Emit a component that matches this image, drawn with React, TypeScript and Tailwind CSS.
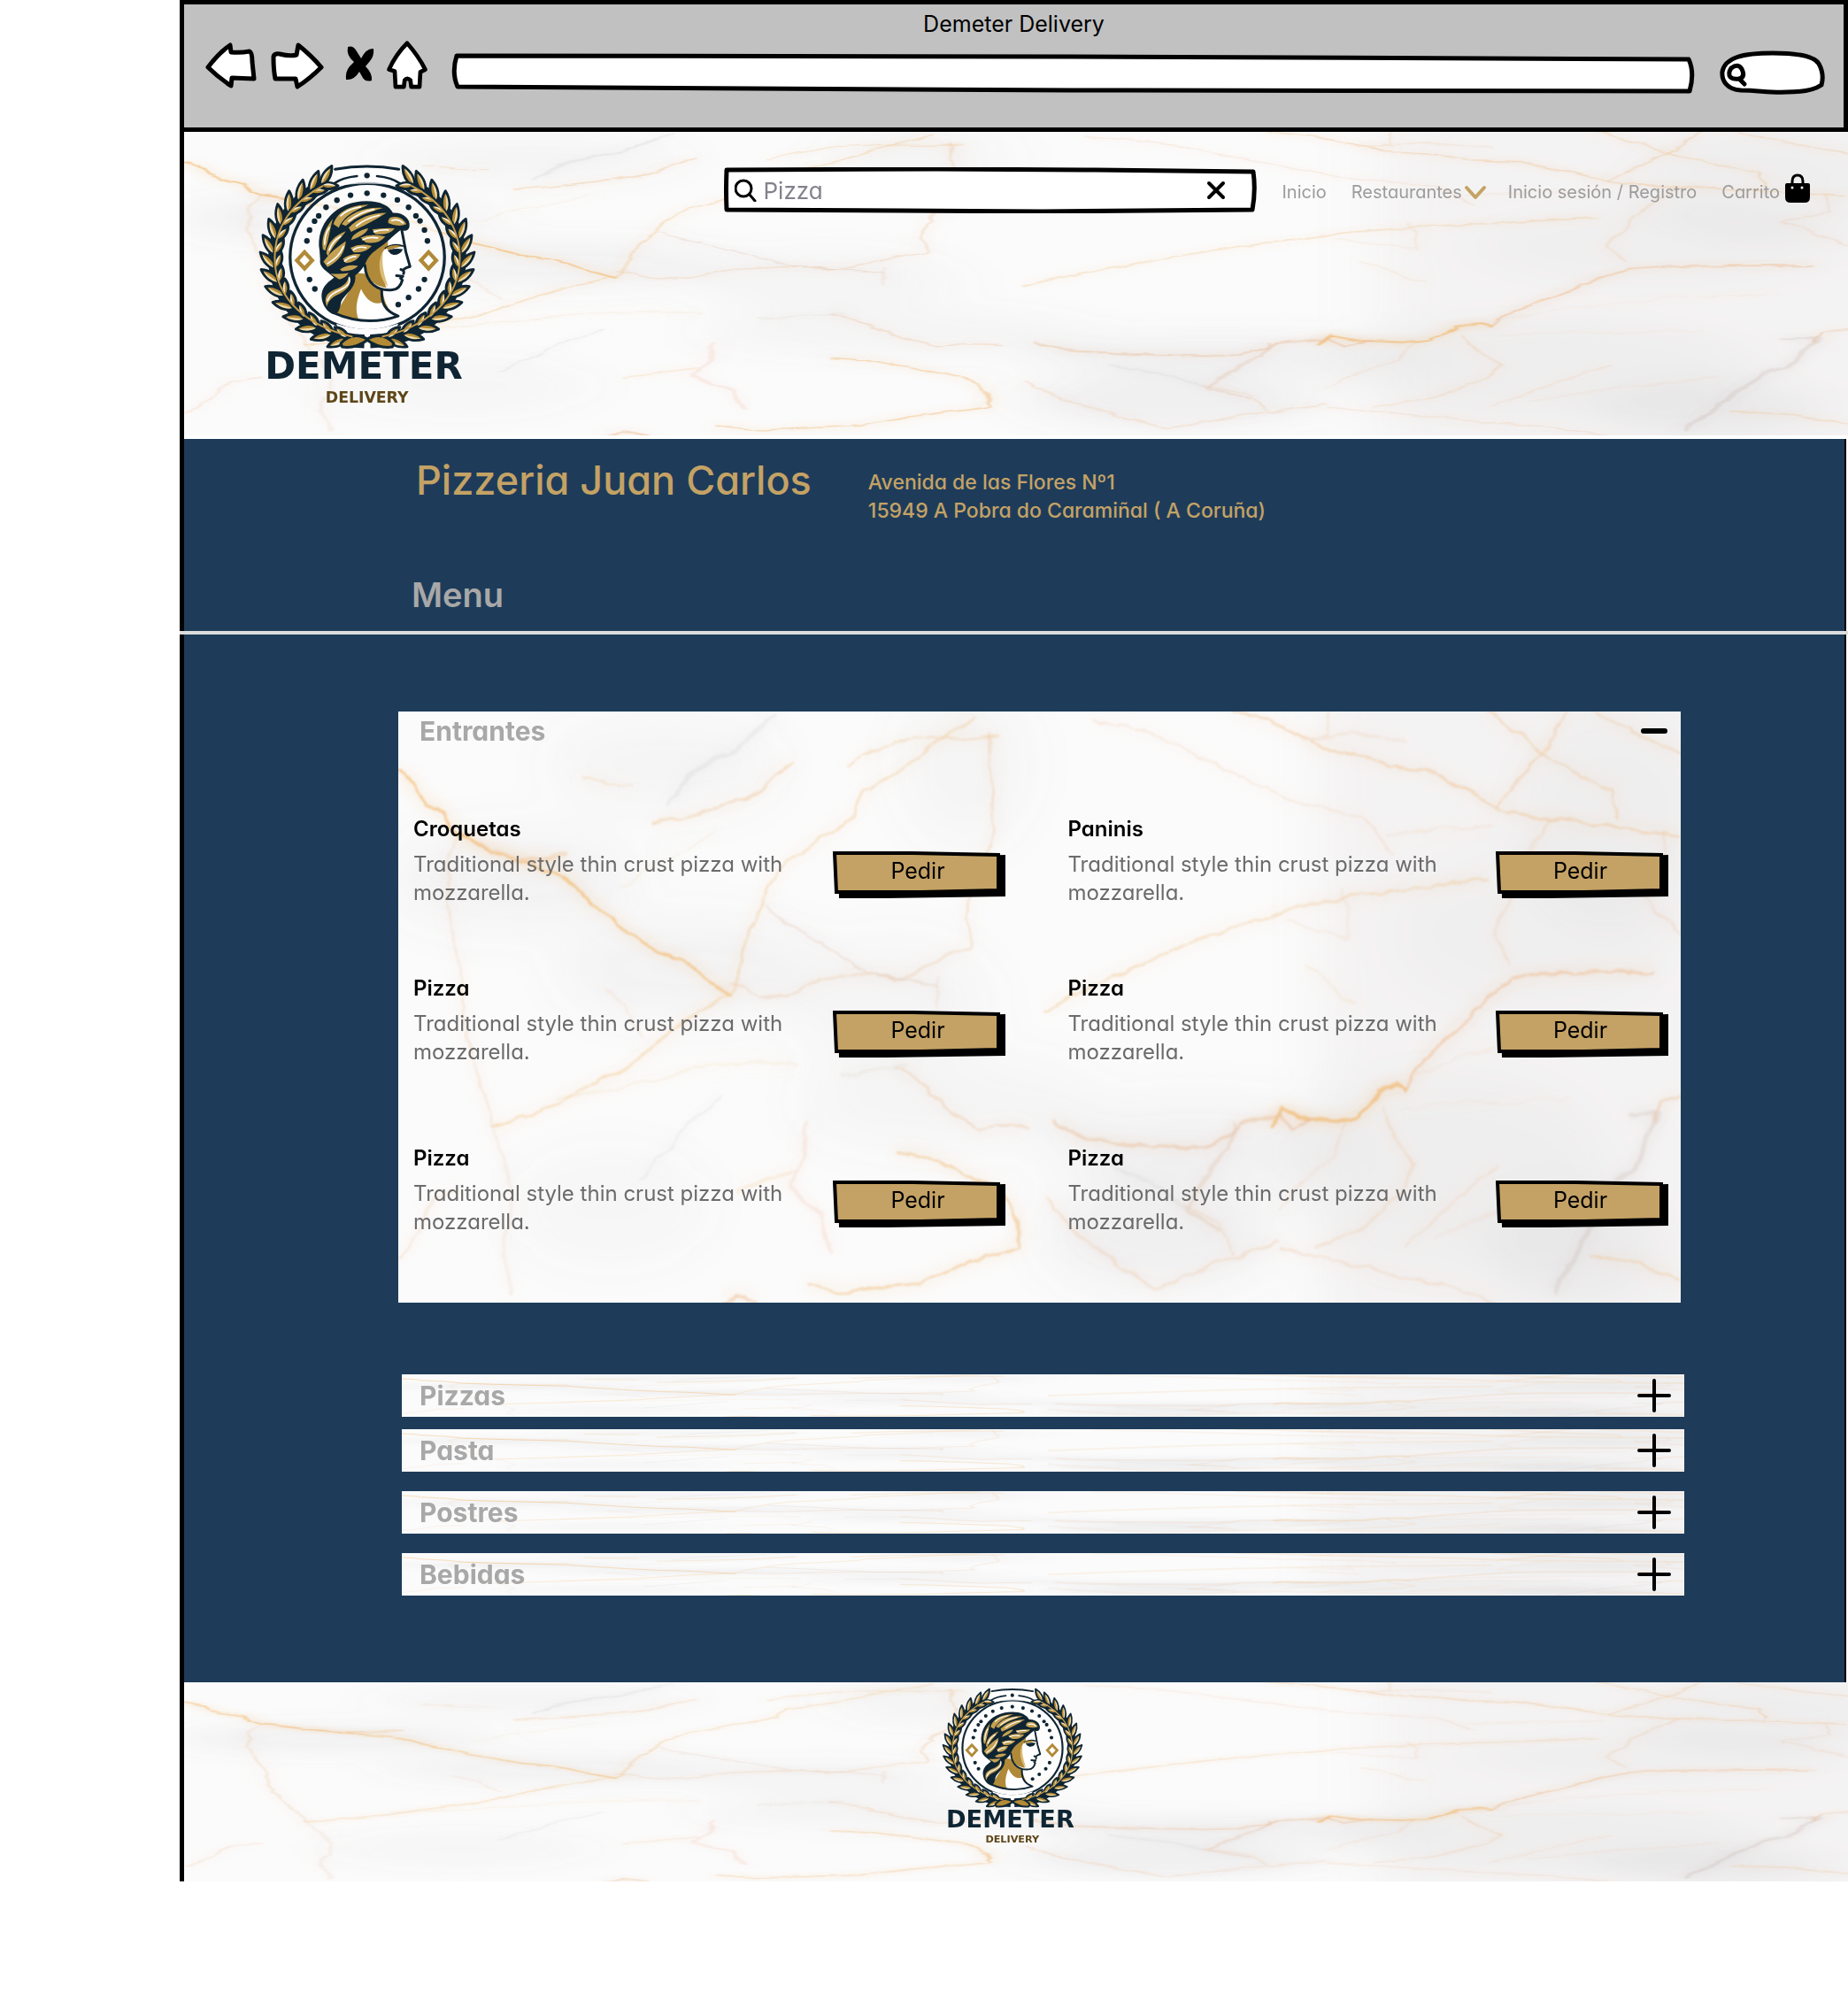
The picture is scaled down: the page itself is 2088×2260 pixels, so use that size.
import { useState } from "react";

const INK = "#0f2533";

/* ---------- Marble texture ---------- */

const LEFT_VEINS: [string, number, number, string][] = [
  ["M22 185L58 212L68 240L130 283L172 345L250 382L335 412L430 445L482 500L590 590L660 638L722 660L838 750", 6, 0.75, "#f3b565"],
  ["M180 350L250 378L330 405L430 400", 12, 0.35, "#f0b878"],
  ["M838 750L780 775L720 815L650 880L600 925L470 990L400 1030L255 1085", 5, 0.6, "#f5c88c"],
  ["M255 1085L240 1030L215 940L180 800L175 690L150 560L140 420L170 350", 6, 0.35, "#eec9a4"],
  ["M255 1085L280 1170L300 1260L280 1400L300 1500", 8, 0.22, "#e9c9ae"],
  ["M838 750L852 700L865 640L895 570L930 480L975 415L1060 355L1145 290L1165 235L1260 180L1350 105L1440 45", 5, 0.5, "#f4c68a"],
  ["M1500 98L1400 98L1340 95L1250 105L1130 165", 4, 0.5, "#f2c48b"],
  ["M650 318L760 288L845 265L900 240L950 190L990 160", 5, 0.5, "#f1bd88"],
  ["M470 195L530 215L600 217", 3, 0.5, "#f2c48b"],
  ["M690 270L740 190L860 115L950 45", 10, 0.18, "#b9b9bd"],
  ["M1475 90L1485 220L1490 330L1450 420L1420 540L1430 625L1330 670L1260 708L1160 695L1060 710L980 745L920 755L838 720", 6, 0.42, "#efc39e"],
  ["M920 530L1020 590L1110 650L1180 695L1290 710L1350 730", 4, 0.45, "#ddbfa8"],
  ["M1350 700L1350 780", 6, 0.25, "#e6bfa8"],
  ["M1250 930L1310 975L1380 1045L1450 1095L1500 1075L1568 1080", 6, 0.45, "#f0c098"],
  ["M1110 950L1180 940L1270 925", 8, 0.22, "#dcd2c0"],
  ["M1030 1075L1010 1180L980 1230L1060 1300L1085 1400", 9, 0.25, "#f3bfa4"],
  ["M860 1240L930 1215L990 1195", 8, 0.28, "#f6c98f"],
  ["M1030 1480L1120 1500L1210 1490L1300 1480L1400 1435L1550 1385L1550 1320L1510 1250L1400 1190L1320 1155L1250 1140", 6, 0.6, "#f1bd7c"],
  ["M820 1528L850 1505L900 1525", 6, 0.6, "#ecbb8d"],
  ["M22 1420L70 1350L110 1260L170 1240", 6, 0.3, "#efc39e"],
  ["M620 1210L700 1120L780 1030L820 1000", 5, 0.3, "#cfcccb"],
  ["M530 735L580 770L620 850", 6, 0.25, "#edc7a5"],
  ["M410 1010L560 985L760 930L900 915L1000 930", 6, 0.25, "#f3d5a8"],
  ["M570 480L640 420L700 395L800 340", 5, 0.2, "#eed7b0"],
];

const RIGHT_VEINS: [string, number, number, string][] = [
  ["M450 31L540 55L610 90L660 125L740 135L830 170L910 178L1000 225L1080 272L1160 300L1220 298L1280 315L1400 325L1521 345", 5, 0.6, "#f2bd83"],
  ["M1250 31L1210 100L1160 170L1080 270", 4, 0.6, "#f1c08e"],
  ["M1060 31L1130 85L1200 145L1290 195L1360 230L1370 300", 4, 0.55, "#f2bd83"],
  ["M1310 31L1380 70L1470 115L1520 135", 4, 0.5, "#f2bd83"],
  ["M680 31L675 90L620 105L740 85L860 110", 5, 0.35, "#eec9a4"],
  ["M110 50L260 90L380 150L470 195L560 245L640 268L760 300L830 390", 4, 0.42, "#f0c9a4"],
  ["M0 785L60 755L150 705L240 665L330 622L440 580L520 560L590 530L720 500L880 480L1060 455", 5, 0.55, "#f2c48b"],
  ["M820 345L930 332L1080 320", 3, 0.35, "#f0c9a4"],
  ["M580 560L650 580L730 605L710 480", 4, 0.3, "#f0c9a4"],
  ["M620 670L690 730L740 772", 5, 0.3, "#efcf9e"],
  ["M1210 300L1150 400L1110 500L1075 600L1110 670", 6, 0.35, "#f0c9a4"],
  ["M1460 690L1330 690L1200 695L1120 708L1070 745L1000 820L930 890L890 940L860 990", 7, 0.6, "#eeb98a"],
  ["M860 990L840 978L800 990L775 1030L750 1055L700 1068L620 1060L570 1035L540 1075", 8, 0.75, "#f1b363"],
  ["M640 1060L590 1090L560 1050L470 1072L440 1105L400 1130L330 1136L200 1125L90 1110L20 1065", 7, 0.5, "#e9b488"],
  ["M455 1070L440 1140L400 1180L370 1240L340 1290L420 1350", 8, 0.35, "#dfb9a0"],
  ["M810 1030L830 1100L880 1180L840 1260L740 1350L650 1385", 5, 0.45, "#f2c9a2"],
  ["M720 1070L690 1150L620 1220L560 1290", 4, 0.35, "#f2c9a2"],
  ["M1080 1180L990 1260L860 1385", 4, 0.4, "#f2c9a2"],
  ["M930 1360L1100 1290L1280 1240", 4, 0.25, "#f2c9a2"],
  ["M1400 1050L1470 1050L1440 1120L1410 1190L1370 1220L1300 1340L1260 1420L1220 1500", 12, 0.3, "#c7b5ae"],
  ["M1521 1000L1475 1020L1460 1070", 5, 0.5, "#eeb98a"],
  ["M0 1260L70 1340L150 1410L270 1490L400 1430L560 1370", 6, 0.4, "#f0c29c"],
  ["M560 1385L700 1420L840 1460L950 1480L1080 1525", 5, 0.4, "#f0c29c"],
  ["M1310 1412L1400 1420L1521 1468", 5, 0.5, "#f2bd83"],
  ["M330 1275L420 1330L450 1400", 5, 0.35, "#eebf96"],
  ["M870 960L1010 900L1180 850L1380 830", 3, 0.25, "#f2c9a2"],
  ["M850 1035L1000 1025L1250 1010", 3, 0.22, "#f2c9a2"],
  ["M1480 340L1490 430L1400 470L1521 590", 5, 0.35, "#eec2a2"],
  ["M160 1180L280 1240L340 1290", 7, 0.25, "#cfc6c6"],
];

const CLOUDS: [number, number, number, number, number][] = [
  [300, 60, 130, 50, 0.05],
  [330, 290, 150, 50, 0.07],
  [560, 330, 110, 70, 0.05],
  [130, 190, 140, 50, 0.07],
  [640, 60, 70, 90, 0.05],
  [900, 490, 170, 45, 0.08],
  [860, 590, 130, 60, 0.09],
  [1280, 250, 160, 90, 0.04],
  [1180, 520, 190, 110, 0.05],
  [1370, 120, 110, 120, 0.05],
  [1330, 610, 100, 60, 0.08],
  [620, 440, 170, 50, 0.05],
  [240, 560, 110, 60, 0.04],
];

function MarbleDefs() {
  return (
    <svg className="absolute h-0 w-0" aria-hidden="true">
      <defs>
        <filter id="vein-soft" x="-5%" y="-5%" width="110%" height="110%">
          <feTurbulence type="fractalNoise" baseFrequency="0.035" numOctaves="3" seed="4" result="n" />
          <feDisplacementMap in="SourceGraphic" in2="n" scale="12" xChannelSelector="R" yChannelSelector="G" result="d" />
          <feGaussianBlur in="d" stdDeviation="1" />
        </filter>
        <filter id="vein-glow" x="-5%" y="-5%" width="110%" height="110%">
          <feGaussianBlur stdDeviation="8" />
        </filter>
        <filter id="cloud-soft" x="-20%" y="-20%" width="140%" height="140%">
          <feGaussianBlur stdDeviation="28" />
        </filter>
      </defs>
    </svg>
  );
}

function Veins() {
  return (
    <>
      <g transform="scale(0.459 0.446) translate(-22 -31)">
        {LEFT_VEINS.map(([d, w, o, c], i) => (
          <path key={i} d={d} stroke={c} strokeWidth={w} strokeOpacity={o} />
        ))}
      </g>
      <g transform="translate(730 0) scale(0.472 0.446) translate(0 -31)">
        {RIGHT_VEINS.map(([d, w, o, c], i) => (
          <path key={i} d={d} stroke={c} strokeWidth={w} strokeOpacity={o} />
        ))}
      </g>
    </>
  );
}

function Marble({ thin = false }: { thin?: boolean }) {
  return (
    <svg
      className={
        "pointer-events-none absolute inset-0 h-full w-full " +
        (thin ? "[&_path]:[stroke-width:1px] [&_path]:[vector-effect:non-scaling-stroke]" : "")
      }
      viewBox="0 0 1448 667"
      preserveAspectRatio="none"
      aria-hidden="true"
    >
      <rect width="1448" height="667" fill="#fbfbfb" />
      <g filter="url(#cloud-soft)">
        <rect x="1040" y="-60" width="520" height="800" fill="#b8b4b0" opacity="0.1" />
        {CLOUDS.map(([x, y, rx, ry, o], i) => (
          <ellipse key={i} cx={x} cy={y} rx={rx} ry={ry} fill="#85838c" opacity={o} />
        ))}
      </g>
      {!thin && (
        <g fill="none" filter="url(#vein-glow)">
          <Veins />
        </g>
      )}
      <g fill="none" strokeLinejoin="round" strokeLinecap="round" opacity="0.85" filter={thin ? undefined : "url(#vein-soft)"}>
        <Veins />
      </g>
    </svg>
  );
}

/* ---------- Brand mark ---------- */

const LEAF_ANGLES = [12, 22, 32, 42, 52, 62, 72, 82, 92, 102, 112, 122, 132, 142, 150];

function Branch() {
  return (
    <g>
      <path d="M425 648C250 643 122 520 122 365C122 250 190 165 292 115" fill="none" stroke={INK} strokeWidth="46" />
      {LEAF_ANGLES.map((deg) => {
        const t = (deg * Math.PI) / 180;
        const x = 435 - 314 * Math.sin(t);
        const y = 362 + 280 * Math.cos(t);
        const dir = (Math.atan2(-280 * Math.sin(t), -314 * Math.cos(t)) * 180) / Math.PI;
        return (
          <g key={deg} transform={`translate(${x.toFixed(1)} ${y.toFixed(1)})`}>
            <g transform={`rotate(${(dir - 32).toFixed(1)})`}>
              <path d="M-2 0C14-17 46-19 76-3C52 14 20 16-2 0Z" fill="#b38a35" stroke={INK} strokeWidth="9" strokeLinejoin="round" />
              <path d="M6-2C22-13 46-13 66-3C44-3 26-2 6-2Z" fill="#ecd8a6" />
            </g>
            <g transform={`rotate(${(dir + 30).toFixed(1)})`}>
              <path d="M-2 0C12-14 36-16 58-2C40 13 16 14-2 0Z" fill="#b38a35" stroke={INK} strokeWidth="9" strokeLinejoin="round" />
              <path d="M6-2C18-11 34-11 50-2C34-3 20-2 6-2Z" fill="#f6ecd2" />
            </g>
          </g>
        );
      })}
      <path d="M345 655C375 622 405 622 438 642C410 662 380 672 350 667Z" fill="#b38a35" stroke={INK} strokeWidth="9" strokeLinejoin="round" />
      <path d="M385 632C240 600 121 510 121 365C121 260 180 175 285 120" fill="none" stroke="#c39b49" strokeWidth="6" />
    </g>
  );
}

const DOTS: [number, number][] = [
  [434, 85], [434, 145], [378, 152], [490, 152], [332, 169], [537, 168], [295, 193], [575, 193],
  [270, 222], [600, 222], [256, 240], [614, 239], [239, 270], [629, 270], [230, 307], [639, 307],
  [239, 438], [629, 438], [257, 470], [609, 470], [575, 499], [540, 523],
];

function Logo({ className }: { className: string }) {
  return (
    <svg className={className} viewBox="60 45 750 820" role="img" aria-label="Demeter Delivery">
      <ellipse cx="435" cy="362" rx="262" ry="250" fill="#fff" fillOpacity="0.6" stroke={INK} strokeWidth="10" />
      <path d="M330 66Q435 44 540 66L560 125Q435 100 310 125Z" fill="#fff" fillOpacity="0.7" />
      <g fill="none" stroke={INK} strokeLinecap="round">
        <path d="M326 64Q434 44 542 64" strokeWidth="9" />
        <path d="M322 112Q350 92 400 87M546 112Q518 92 468 87" strokeWidth="8" />
      </g>
      <path d="M330 588Q435 625 540 588L530 615L435 648L340 615Z" fill="#fff" />
      <Branch />
      <g transform="translate(870 0) scale(-1 1)">
        <Branch />
      </g>
      {DOTS.map(([x, y]) => (
        <circle key={`${x}-${y}`} cx={x} cy={y} r="9.5" fill={INK} />
      ))}
      <path d="M222 345L248 373L222 401L196 373ZM643 345L669 373L643 401L617 373Z" fill="#fff" stroke="#b08a38" strokeWidth="13" />

      {/* neck and bust */}
      <path d="M395 415L372 480L345 525L318 552Q420 600 540 562Q495 545 486 470L440 420Z" fill="#b08a38" />
      <path d="M414 470C400 505 392 540 405 572Q470 582 535 563Q498 545 488 515C455 528 430 505 414 470Z" fill="#fff" />
      {/* face */}
      <path d="M440 360L470 300L555 268L565 320L570 362L580 392L558 402L556 418L548 428L553 440L550 462L535 472L500 474C450 465 425 430 428 385Z" fill="#fff" />
      <path d="M505 328C470 345 475 400 500 466C455 460 425 430 428 380L450 335Q480 300 505 290Z" fill="#b08a38" />
      <path d="M488 345C468 375 475 425 497 455L505 462C494 425 482 390 488 345Z" fill="#dbbd78" />
      <path d="M552 270L566 345L580 394Q560 398 557 408M549 404Q562 407 558 418M534 425L556 427L548 434L554 440Q545 472 520 473C470 478 430 450 427 390M484 470C482 515 492 545 540 562Q430 600 318 550" fill="none" stroke={INK} strokeWidth="9" strokeLinejoin="round" strokeLinecap="round" />
      <path d="M496 332Q525 312 560 325M508 340Q530 334 552 337Q545 352 525 352Q515 350 508 340Z" fill={INK} stroke={INK} strokeWidth="5" strokeLinecap="round" />
      <path d="M497 331Q525 315 552 326Q530 330 508 338Z" fill="#b08a38" />
      {/* hair */}
      <path d="M273 340C258 250 330 172 432 172C480 172 510 188 522 212C560 210 582 235 578 258C575 274 560 274 548 270C520 290 505 310 478 328C455 345 440 355 428 385C420 400 410 412 394 424C400 470 350 490 345 520C340 545 335 555 318 555C290 545 270 500 285 470C295 450 312 440 322 432C308 415 270 400 275 370Z" fill={INK} />
      <g fill="#c4a052">
        <path d="M512 228Q548 216 568 250Q540 262 506 246Q504 236 512 228Z" />
        <path d="M452 268Q490 262 528 264Q512 288 462 284Z" />
        <path d="M412 296Q448 280 496 292Q474 320 430 312Z" />
        <path d="M378 330Q412 314 450 324Q428 350 388 345Z" />
        <path d="M352 368Q380 348 412 352Q400 380 362 382Z" />
        <path d="M342 404Q368 384 404 392Q388 410 350 410Z" />
        <path d="M320 250C335 205 380 185 440 184C405 200 360 215 338 262Z" />
        <path d="M348 250C375 210 430 190 488 195C440 210 400 222 362 256Z" />
        <path d="M372 262C405 228 450 212 500 212C465 235 420 258 380 276Z" />
        <path d="M284 335C278 290 295 262 318 232C306 275 305 300 292 340Z" />
        <path d="M296 350C300 310 325 290 362 274C345 300 320 318 302 358Z" />
        <path d="M286 378C310 345 330 330 362 308C360 345 340 375 300 396Z" />
        <path d="M385 292C400 275 420 268 438 264C432 282 408 294 380 304Z" />
        <path d="M310 418Q345 420 372 416Q360 434 340 438Z" />
        <path d="M372 425C390 460 355 480 330 492C310 502 302 515 298 530C282 490 310 478 335 468C358 458 370 445 372 425Z" />
      </g>
      <g fill="none" stroke="#fff" strokeWidth="5" strokeLinecap="round">
        <path d="M374 432C380 460 350 470 326 482Q306 492 300 510M345 222Q370 198 412 192M372 240Q410 208 458 200M398 256Q430 230 476 220M290 318Q290 285 306 262M306 338Q316 308 344 292M300 384Q340 362 354 326M458 276Q480 268 506 270M420 303Q440 292 470 297M388 337Q404 324 430 330M358 376Q374 360 396 360M518 238Q540 230 556 246" />
      </g>

      <text x="423" y="775" textAnchor="middle" fontSize="126" fontWeight="700" fill={INK} className="font-['DejaVu_Sans']">
        DEMETER
      </text>
      <text x="434" y="856" textAnchor="middle" fontSize="52" fontWeight="700" fill="#5d4618" className="font-['DejaVu_Sans']">
        DELIVERY
      </text>
    </svg>
  );
}

/* ---------- Browser chrome ---------- */

function BrowserBar() {
  return (
    <header className="relative h-[149px] border-y-[5px] border-r-[5px] border-black bg-[#c1c1c1]">
      <p className="pt-1 text-center text-[25px] leading-9 text-black">Demeter Delivery</p>
      <div className="flex items-start pr-5 pl-[22px]">
        <button type="button" aria-label="Atrás" className="h-14 w-[62px]">
          <svg viewBox="0 0 62 56" className="h-full w-full" fill="#fff" stroke="#000" strokeWidth="5" strokeLinejoin="round">
            <path d="M5 31Q17 15 30 6L31 14Q42 15 52 13Q55 14 55 25L57 44L32 43L31 52Q16 42 5 31Z" />
          </svg>
        </button>
        <button type="button" aria-label="Adelante" className="ml-3 h-14 w-[62px]">
          <svg viewBox="0 0 62 56" className="h-full w-full" fill="#fff" stroke="#000" strokeWidth="5" strokeLinejoin="round">
            <path d="M5 20Q5 15 12 16Q24 19 31 17L33 6Q48 18 59 31Q46 44 32 53L30 44L7 44Q5 34 5 20Z" />
          </svg>
        </button>
        <button type="button" aria-label="Detener" className="ml-5 h-14 w-10">
          <svg viewBox="0 0 40 56" className="h-full w-full">
            <path d="M7 8Q13 6 17 13L22 21Q28 9 36 10Q37 18 32 24L27 30Q35 38 34 46Q27 48 24 43L20 36Q14 46 5 45Q4 36 9 30L14 25Q5 18 7 8Z" fill="#000" />
          </svg>
        </button>
        <button type="button" aria-label="Inicio" className="ml-2 h-14 w-[52px]">
          <svg viewBox="0 0 52 60" className="h-full w-full" fill="#fff" stroke="#000" strokeWidth="5" strokeLinejoin="round">
            <path d="M26 4Q40 20 48 36L42 39L41 57L31 57L30 49Q26 45 23 49L22 57L12 57L11 38L4 36Q12 18 26 4Z" />
          </svg>
        </button>
        <div className="relative mt-[15px] ml-6 h-[46px] flex-1">
          <svg viewBox="0 0 1406 46" preserveAspectRatio="none" className="absolute inset-0 h-full w-full" aria-hidden="true">
            <path d="M6 3L700 4L1399 7Q1406 22 1400 43L700 42L7 38Q0 22 6 3Z" fill="#fff" stroke="#000" strokeWidth="5" strokeLinejoin="round" />
          </svg>
          <input aria-label="Dirección" className="relative h-full w-full bg-transparent px-4 text-xl outline-none" />
        </div>
        <div className="relative mt-3 ml-7 h-[50px] w-[120px]">
          <svg viewBox="0 0 120 50" className="absolute inset-0 h-full w-full" aria-hidden="true">
            <path d="M24 45C8 44 2 34 3 24C6 8 26 3 60 3C90 3 107 7 112 15C117 24 117 32 115 39C108 44 94 47 76 47C56 48 44 45 24 45Z" fill="#fff" stroke="#000" strokeWidth="5" />
            <path d="M13 20Q21 14 25 21Q29 29 23 32Q15 33 12 30Q9 26 13 20ZM22 32L28 38" fill="none" stroke="#000" strokeWidth="5" strokeLinecap="round" />
          </svg>
          <input aria-label="Buscar en la web" className="relative h-full w-full bg-transparent pr-4 pl-10 outline-none" />
        </div>
      </div>
    </header>
  );
}

/* ---------- Site ---------- */

function SiteHeader() {
  return (
    <div className="relative h-[343px]">
      <Marble />
      <div className="relative flex items-start pt-9 pl-[82px]">
        <Logo className="h-[273px] w-[250px] shrink-0" />
        <div className="relative mt-1 ml-auto flex h-[52px] w-[602px] items-center">
          <svg viewBox="0 0 602 52" preserveAspectRatio="none" className="absolute inset-0 h-full w-full" aria-hidden="true">
            <path d="M3 3L240 2L420 3L598 5Q601 26 597 48L360 50L200 49L3 48Q2 26 3 3Z" fill="#fff" stroke="#000" strokeWidth="5" strokeLinejoin="round" />
          </svg>
          <svg viewBox="0 0 26 26" className="relative ml-3 h-[26px] w-[26px]" fill="none" stroke="#000" strokeWidth="3" strokeLinecap="round" aria-hidden="true">
            <circle cx="10" cy="11" r="9" />
            <path d="M17 18L23 25" />
          </svg>
          <input
            aria-label="Buscar restaurante"
            defaultValue="Pizza"
            className="relative ml-[6px] h-full min-w-0 flex-1 bg-transparent text-[26px] text-[#82828c] outline-none"
          />
          <button type="button" aria-label="Borrar búsqueda" className="relative mr-[31px] p-1">
            <svg viewBox="0 0 22 22" className="h-[22px] w-[22px]" stroke="#000" strokeWidth="4" strokeLinecap="round">
              <path d="M3 3L19 19M19 3L3 19" />
            </svg>
          </button>
        </div>
        <nav className="mt-4 mr-[43px] ml-7 flex h-8 items-center text-xl text-[#9c9c9c]">
          <a href="#inicio">Inicio</a>
          <button type="button" className="ml-7 flex items-center gap-[2px]">
            Restaurantes
            <svg viewBox="0 0 26 20" className="h-5 w-[26px]" fill="none" stroke="#c4a265" strokeWidth="4" strokeLinecap="round" strokeLinejoin="round" aria-hidden="true">
              <path d="M3 5L13 16L23 5" />
            </svg>
          </button>
          <a href="#registro" className="ml-6">Inicio sesión / Registro</a>
          <a href="#carrito" className="ml-7 flex items-center gap-[6px]">
            Carrito
            <svg viewBox="0 0 28 34" className="-mt-2 h-[34px] w-7" aria-hidden="true">
              <path d="M8 14V9Q8 2 14 2Q20 2 20 9V14" fill="none" stroke="#000" strokeWidth="3" />
              <path d="M2 11H26Q28 11 28 13V27Q28 33 22 33H6Q0 33 0 27V13Q0 11 2 11Z" fill="#000" />
              <circle cx="8" cy="16" r="1.5" fill="#fff" />
              <circle cx="19" cy="16" r="1.5" fill="#fff" />
            </svg>
          </a>
        </nav>
      </div>
    </div>
  );
}

function OrderButton() {
  return (
    <button type="button" className="relative mt-[45px] flex h-[53px] w-[195px] shrink-0 items-center justify-center pr-1 pb-2 text-[25px] text-black">
      <svg viewBox="0 0 195 53" className="absolute inset-0 h-full w-full" aria-hidden="true">
        <path d="M6 10L195 4V51L60 53H7Z" fill="#000" />
        <path d="M2 2L90 2L187 4V44L100 46L4 46Z" fill="#c4a265" stroke="#000" strokeWidth="4" />
      </svg>
      <span className="relative">Pedir</span>
    </button>
  );
}

function Dish({ name }: { name: string }) {
  return (
    <article className="flex items-start justify-between">
      <div className="w-[440px]">
        <h3 className="mb-1 text-2xl leading-10 font-semibold text-black">{name}</h3>
        <p className="text-2xl leading-8 text-[#6b6b6b]">Traditional style thin crust pizza with mozzarella.</p>
      </div>
      <OrderButton />
    </article>
  );
}

const ROWS = [
  { gap: "mt-[70px]", names: ["Croquetas", "Paninis"] },
  { gap: "mt-[72px]", names: ["Pizza", "Pizza"] },
  { gap: "mt-[84px]", names: ["Pizza", "Pizza"] },
];

function Starters() {
  const [open, setOpen] = useState(true);
  return (
    <section className="relative mr-[185px] ml-[242px] pb-[75px]">
      <Marble />
      <div className="relative">
        <button type="button" aria-expanded={open} onClick={() => setOpen(!open)} className="flex w-full items-center justify-between pt-px pr-[15px] pl-6 text-left">
          <span className="text-[30px] leading-[42px] font-bold text-[#a8a8a8]">Entrantes</span>
          <svg viewBox="0 0 30 6" className="h-[6px] w-[30px]" stroke="#000" strokeWidth="6" strokeLinecap="round" aria-hidden="true">
            <path d="M3 3H27" />
          </svg>
        </button>
        {open &&
          ROWS.map((row, i) => (
            <div key={i} className={"grid grid-cols-[668fr_677fr] gap-[70px] pr-[14px] pl-[17px] " + row.gap}>
              {row.names.map((n, j) => (
                <Dish key={j} name={n} />
              ))}
            </div>
          ))}
      </div>
    </section>
  );
}

const SECTIONS = [
  { name: "Pizzas", gap: "mt-[81px]" },
  { name: "Pasta", gap: "mt-[14px]" },
  { name: "Postres", gap: "mt-[22px]" },
  { name: "Bebidas", gap: "mt-[22px]" },
];

export default function App() {
  return (
    <div className="min-h-screen bg-white pl-[203px] font-['Inter','Noto_Sans',sans-serif] [font-feature-settings:'cv11']">
      <MarbleDefs />
      <div className="border-l-[5px] border-black">
        <BrowserBar />
        <SiteHeader />
        <main className="mt-1 mr-[2px] border-r-2 border-black bg-[#1e3c5a] pb-[98px]">
          <div className="flex items-start pt-[17px] pl-[262px] text-[#c4a265]">
            <h1 className="text-[45px] leading-[60px] font-medium">Pizzeria Juan Carlos</h1>
            <address className="mt-4 ml-16 text-[23px] leading-8 font-medium not-italic">
              Avenida de las Flores Nº1
              <br />
              15949 A Pobra do Caramiñal ( A Coruña)
            </address>
          </div>
          <h2 className="mt-[53px] pl-[257px] text-[38px] leading-[52px] font-semibold text-[#a8a8a8]">Menu</h2>
          <hr className="mt-[15px] -mr-1 -ml-[5px] h-1 border-0 bg-[#dcdcdc]" />
          <div className="mt-[87px]">
            <Starters />
          </div>
          {SECTIONS.map((s) => (
            <section key={s.name} className={"relative mr-[181px] ml-[246px] " + s.gap}>
              <Marble thin />
              <button type="button" aria-expanded={false} className="relative flex h-12 w-full items-center justify-between pr-[14px] pl-5 text-left">
                <span className="text-[30px] leading-[48px] font-bold text-[#a8a8a8]">{s.name}</span>
                <svg viewBox="0 0 40 40" className="h-10 w-10" stroke="#000" strokeWidth="4" strokeLinecap="round" aria-hidden="true">
                  <path d="M3 20H37M20 3V37" />
                </svg>
              </button>
            </section>
          ))}
        </main>
        <footer className="relative flex h-[225px] justify-center pt-[6px] pr-2">
          <Marble />
          <Logo className="relative h-[177px] w-[162px]" />
        </footer>
      </div>
    </div>
  );
}
